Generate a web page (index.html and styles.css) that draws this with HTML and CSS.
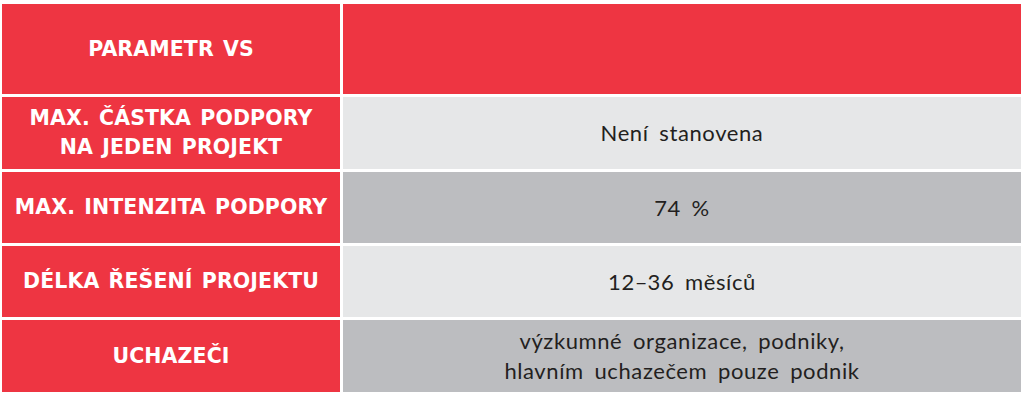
FILE: index.html
```html
<!DOCTYPE html>
<html lang="cs">
<head>
<meta charset="utf-8">
<link rel="stylesheet" href="styles.css">
</head>
<body>
<div class="table">
  <div class="cell label head">PARAMETR VS</div>
  <div class="cell value head"></div>

  <div class="cell label">MAX. ČÁSTKA PODPORY<br>NA JEDEN PROJEKT</div>
  <div class="cell value light">Není stanovena</div>

  <div class="cell label">MAX. INTENZITA PODPORY</div>
  <div class="cell value dark">74 %</div>

  <div class="cell label">DÉLKA ŘEŠENÍ PROJEKTU</div>
  <div class="cell value light">12<span class="dash">–</span>36 měsíců</div>

  <div class="cell label">UCHAZEČI</div>
  <div class="cell value dark">výzkumné organizace, podniky,<br>hlavním uchazečem pouze podnik</div>
</div>
</body>
</html>
```

FILE: styles.css
```css
html, body {
  margin: 0;
  padding: 0;
  background: #ffffff;
}
body {
  padding: 4px 3px 0 2px;
}
.table {
  display: grid;
  width: 1019px;
  grid-template-columns: 338px 678px;
  grid-template-rows: 90px 72px 71px 71px 72px;
  gap: 3px;
}
.cell {
  display: flex;
  align-items: center;
  justify-content: center;
  text-align: center;
}
.label {
  background: #ee3542;
  color: #ffffff;
  font-family: "DejaVu Sans", sans-serif;
  font-weight: 700;
  font-size: 20.5px;
  line-height: 29px;
  letter-spacing: 0.1px;
  word-spacing: 2px;
}
.value.head {
  background: #ee3542;
}
.value {
  color: #231f20;
  font-family: "Lato", sans-serif;
  font-weight: 400;
  font-size: 22px;
  line-height: 30px;
  letter-spacing: 0.6px;
  word-spacing: 4.5px;
}
.dash {
  letter-spacing: -1px;
  margin-right: 1px;
}
.light { background: #e6e7e8; }
.dark { background: #bcbdc0; }
```
